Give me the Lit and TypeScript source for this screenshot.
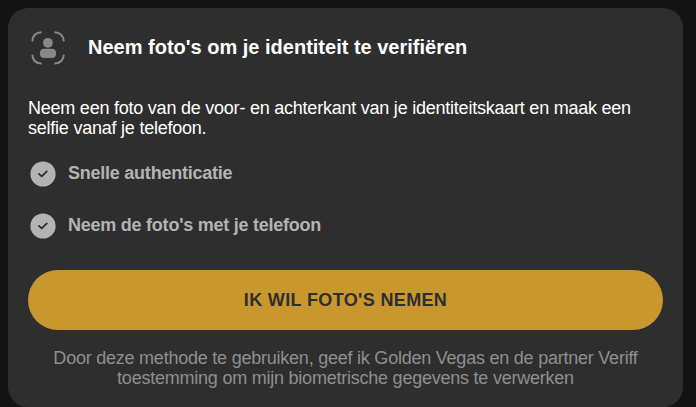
import { LitElement, html, css } from "lit";
import { customElement } from "lit/decorators.js";

@customElement("app-root")
export class AppRoot extends LitElement {
  static styles = css`
    :host {
      display: block;
      box-sizing: border-box;
      height: 407px;
      padding: 8px 13px 0 8px;
      overflow: hidden;
      background: #131313;
      font-family: "Liberation Sans", Arial, sans-serif;
      font-size: 18px;
      line-height: 20px;
    }
    .card {
      box-sizing: border-box;
      height: 399px;
      padding: 20px 20px 0;
      border-radius: 20px;
      background: #2e2e2e;
      color: #fff;
    }
    .head {
      display: flex;
      align-items: center;
      gap: 20px;
      height: 40px;
    }
    .face {
      display: block;
      width: 40px;
      height: 40px;
    }
    .title {
      margin: 0;
      padding-bottom: 2px;
      font-size: 20px;
      line-height: 24px;
      white-space: nowrap;
    }
    .intro {
      margin: 30px 0 0;
      letter-spacing: -0.23px;
    }
    .list {
      list-style: none;
      margin: 20px 0 0;
      padding: 0;
      display: grid;
      gap: 20px;
      color: #b3b3b3;
      font-weight: 700;
      letter-spacing: -0.24px;
    }
    .item {
      display: flex;
      align-items: center;
      gap: 10px;
      height: 32px;
    }
    .check {
      display: block;
      width: 30px;
      height: 32px;
    }
    .label {
      padding-bottom: 2px;
    }
    .action {
      display: block;
      width: 100%;
      height: 60px;
      margin: 28px 0 0;
      padding: 0;
      border: 0;
      border-radius: 30px;
      background: #c8982f;
      color: #2e2e2e;
      font: 700 18px/20px "Liberation Sans", Arial, sans-serif;
      letter-spacing: 0.36px;
    }
    .note {
      margin: 18px 0 0;
      color: #8f8f8f;
      text-align: center;
      letter-spacing: -0.23px;
    }
  `;

  private items = ["Snelle authenticatie", "Neem de foto's met je telefoon"];

  render() {
    return html`
      <section class="card">
        <header class="head">
          <svg class="face" viewBox="0 0 40 40" aria-hidden="true">
            <g fill="none" stroke="#888" stroke-width="2" stroke-linecap="round">
              <path d="M4.4 12.6C4.8 8 8 4.8 12.8 4.3" />
              <path d="M27.2 4.3C32 4.8 35.2 8 35.7 12.6" />
              <path d="M4.4 27.4C4.8 32 8 35.1 12.8 35.6" />
              <path d="M27.2 35.6C32 35.1 35.2 32 35.7 27.4" />
            </g>
            <circle cx="19.9" cy="14.8" r="4.9" fill="#888" />
            <rect x="12" y="20.7" width="16" height="9.3" rx="4" fill="#888" />
          </svg>
          <h2 class="title">Neem foto's om je identiteit te verifiëren</h2>
        </header>
        <p class="intro">
          Neem een foto van de voor- en achterkant van je identiteitskaart en maak een selfie vanaf je telefoon.
        </p>
        <ul class="list">
          ${this.items.map(
            (item) => html`
              <li class="item">
                <svg class="check" viewBox="0 0 30 32" aria-hidden="true">
                  <circle cx="15" cy="16" r="12.6" fill="#b3b3b3" />
                  <path
                    d="M10.9 15.9L13.7 18.4L18.8 13.4"
                    fill="none"
                    stroke="#2e2e2e"
                    stroke-width="1.8"
                    stroke-linecap="round"
                    stroke-linejoin="round"
                  />
                </svg>
                <span class="label">${item}</span>
              </li>
            `
          )}
        </ul>
        <button class="action" type="button">IK WIL FOTO'S NEMEN</button>
        <p class="note">
          Door deze methode te gebruiken, geef ik Golden Vegas en de partner Veriff toestemming om mijn biometrische gegevens te verwerken
        </p>
      </section>
    `;
  }
}
